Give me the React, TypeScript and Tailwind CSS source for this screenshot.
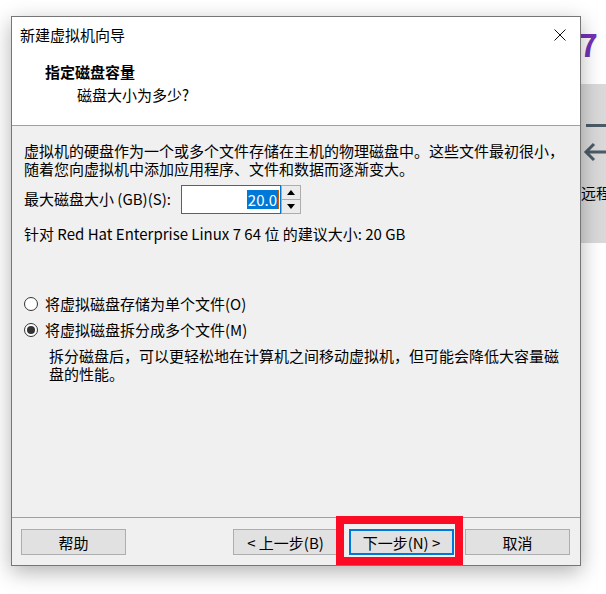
import React from 'react'

function Radio({ checked, label }: { checked?: boolean; label: string }) {
  return (
    <div className="flex h-[20px] items-center pl-[12px]">
      <span className="flex h-[14px] w-[14px] shrink-0 items-center justify-center rounded-full border border-[#333333] bg-white">
        {checked && <span className="h-[8px] w-[8px] rounded-full bg-[#333333]" />}
      </span>
      <span className="ml-[7px] leading-[20px]">{label}</span>
    </div>
  )
}

function Button({ label, primary }: { label: string; primary?: boolean }) {
  return (
    <div
      className={`flex h-[26px] w-[105px] items-center justify-center bg-[#e1e1e1] leading-none ${
        primary ? 'border-2 border-[#0078d7]' : 'border border-[#adadad]'
      }`}
    >
      {label}
    </div>
  )
}

export default function App() {
  return (
    <div className="relative h-[594px] w-[606px] overflow-hidden bg-white font-['Noto_Sans_CJK_SC',sans-serif] text-[15px] text-black">
      {/* desktop behind the wizard */}
      <div className="absolute left-[579px] top-[27px] text-[32px] font-bold leading-none text-[#7432b6]">7</div>
      <div className="absolute left-[580px] top-[84px] h-[159px] w-[26px] bg-[#d9d9d9]">
        <div className="ml-[6px] mt-[40px] h-[3px] bg-[#4b5b67]" />
        <svg width="26" height="30" viewBox="0 0 26 30" className="mt-[10px]">
          <path d="M7 15 H26 M14 7 L6 15 L14 23" fill="none" stroke="#4b5b67" strokeWidth="3" />
        </svg>
        <div className="ml-[1px] mt-[17px] whitespace-nowrap leading-[18px]">远程</div>
      </div>

      {/* wizard window */}
      <div className="absolute left-[11px] top-[16px] flex h-[550px] w-[570px] flex-col border border-[#767676] bg-[#f0f0f0] shadow-[0_6px_20px_rgba(0,0,0,0.3)]">
        <div className="h-[108px] bg-white">
          <div className="flex h-[36px] items-center justify-between pl-[8px] pr-[14px]">
            <span className="leading-[20px]">新建虚拟机向导</span>
            <svg width="12" height="12" viewBox="0 0 12 12">
              <path d="M0.5 0.5 L11.5 11.5 M11.5 0.5 L0.5 11.5" stroke="#111" strokeWidth="1" />
            </svg>
          </div>
          <div className="mt-[9px] pl-[33px] font-bold leading-[20px]">指定磁盘容量</div>
          <div className="mt-[3px] pl-[65px] leading-[20px]">磁盘大小为多少?</div>
        </div>
        <div className="h-px bg-[#a0a0a0]" />

        <div className="flex-1 px-[12px] pt-[16px]">
          <div className="leading-[18px]">
            <div className="whitespace-nowrap">虚拟机的硬盘作为一个或多个文件存储在主机的物理磁盘中。这些文件最初很小，</div>
            <div>随着您向虚拟机中添加应用程序、文件和数据而逐渐变大。</div>
          </div>

          <div className="mt-[7px] flex h-[29px] items-center">
            <span className="w-[157px] whitespace-nowrap">最大磁盘大小 (GB)(S):</span>
            <div className="flex h-[29px] w-[100px] items-center justify-end border border-[#0078d7] bg-white pr-[1px]">
              <span className="bg-[#0078d7] px-[1px] leading-[19px] text-white">20.0</span>
              <span className="h-[19px] w-px bg-[#d05a00]" />
            </div>
            <div className="flex h-[29px] w-[20px] flex-col border border-[#adadad] bg-[#ececec]">
              <div className="flex h-[14px] items-center justify-center border-b border-[#adadad]">
                <svg width="8" height="5" viewBox="0 0 8 5">
                  <path d="M0 5 L4 0 L8 5 Z" fill="#000" />
                </svg>
              </div>
              <div className="flex flex-1 items-center justify-center">
                <svg width="8" height="5" viewBox="0 0 8 5">
                  <path d="M0 0 L4 5 L8 0 Z" fill="#000" />
                </svg>
              </div>
            </div>
          </div>

          <div className="mt-[11px] leading-[18px]">针对 Red Hat Enterprise Linux 7 64 位 的建议大小: 20 GB</div>

          <div className="mt-[51px] -ml-[12px]">
            <Radio label="将虚拟磁盘存储为单个文件(O)" />
            <div className="mt-[6px]">
              <Radio checked label="将虚拟磁盘拆分成多个文件(M)" />
            </div>
            <div className="mt-[7px] pl-[37px] leading-[18px]">
              <div className="whitespace-nowrap">拆分磁盘后，可以更轻松地在计算机之间移动虚拟机，但可能会降低大容量磁</div>
              <div>盘的性能。</div>
            </div>
          </div>
        </div>

        <div className="flex h-[48px] justify-between border-t border-[#a0a0a0] pl-[9px] pr-[10px] pt-[11px]">
          <Button label="帮助" />
          <div className="flex gap-[11px]">
            <Button label="< 上一步(B)" />
            <Button primary label="下一步(N) >" />
            <Button label="取消" />
          </div>
        </div>
      </div>

      {/* red annotation box */}
      <div className="absolute left-[336px] top-[516px] h-[49px] w-[127px] border-[8px] border-[#fc0b24]" />
    </div>
  )
}
